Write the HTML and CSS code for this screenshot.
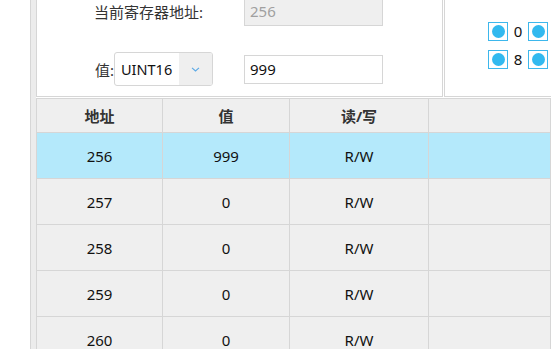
FILE: index.html
```html
<!DOCTYPE html>
<html lang="zh-CN">
<head>
    <meta charset="UTF-8">
    <title>寄存器</title>
    <link rel="stylesheet" href="styles.css">
</head>
<body>
    <div class="side"></div>

    <div class="frame">
        <div class="main">
            <div class="top">
                <div class="edit-panel">
                    <div class="edit-grid">
                        <span class="label">当前寄存器地址:</span>
                        <div class="field disabled">256</div>

                        <div class="value-cell">
                            <span class="label">值:</span>
                            <div class="combo">
                                <span class="combo-text">UINT16</span>
                                <span class="combo-arrow">
                                    <svg width="9" height="5" viewBox="0 0 9 5"><path d="M1 0.8 L4.5 4 L8 0.8" fill="none" stroke="#5ba9e6" stroke-width="1.1"/></svg>
                                </span>
                            </div>
                        </div>
                        <div class="field">999</div>
                    </div>
                </div>

                <div class="bit-panel">
                    <div class="bits" id="bits"></div>
                </div>
            </div>

            <table class="regs">
                <thead>
                    <tr>
                        <th class="c1">地址</th>
                        <th class="c2">值</th>
                        <th class="c3">读/写</th>
                        <th></th>
                    </tr>
                </thead>
                <tbody id="rows"></tbody>
            </table>
        </div>
    </div>

    <script>
        // 位指示灯 (0-7 第一行, 8-15 第二行)
        const bits = document.getElementById('bits');
        for (let i = 0; i < 16; i++) {
            const item = document.createElement('div');
            item.className = 'bit';
            item.innerHTML = '<span class="led"><span class="dot"></span></span><span class="bit-no">' + i + '</span>';
            bits.appendChild(item);
        }

        // 寄存器列表
        const rows = document.getElementById('rows');
        const regs = [
            { addr: 256, value: 999 },
            { addr: 257, value: 0 },
            { addr: 258, value: 0 },
            { addr: 259, value: 0 },
            { addr: 260, value: 0 }
        ];
        regs.forEach((r, idx) => {
            const tr = document.createElement('tr');
            if (idx === 0) tr.className = 'selected';
            tr.innerHTML = `<td>${r.addr}</td><td>${r.value}</td><td>R/W</td><td></td>`;
            rows.appendChild(tr);
        });
    </script>
</body>
</html>
```

FILE: styles.css
```css
body {
    margin: 0;
    height: 349px;
    display: flex;
    overflow: hidden;
    background: #fff;
    font-family: "Noto Sans", "Noto Sans CJK SC", sans-serif;
    font-size: 15px;
    color: #222;
}

.side {
    width: 30px;
    flex-shrink: 0;
    background: #fff;
}

.frame {
    flex: 1;
    display: flex;
    border-left: 1px solid #d6d6d6;
    background: #ececec;
    padding-left: 5px;
    min-width: 0;
}

.main {
    flex: 1;
    min-width: 0;
    overflow: hidden;
    background: #fff;
}

.top {
    display: flex;
    gap: 1px;
    height: 97px;
    margin-bottom: 1px;
}

.edit-panel {
    width: 405px;
    flex-shrink: 0;
    border: 1px solid #d6d6d6;
    border-top: none;
    background: #fff;
}

.edit-grid {
    display: grid;
    grid-template-columns: 176px 139px;
    column-gap: 31px;
    row-gap: 26px;
    align-items: center;
    justify-items: end;
    margin-top: -3px;
}

.edit-grid > .label {
    padding-right: 10px;
}

.label {
    color: #333;
}

.value-cell {
    display: flex;
    align-items: center;
}

.field {
    justify-self: stretch;
    height: 27px;
    line-height: 27px;
    padding-left: 5px;
    border: 1px solid #d6d6d6;
    background: #fff;
    color: #111;
}

.field.disabled {
    background: #efefef;
    color: #a0a0a0;
}

.combo {
    display: flex;
    width: 97px;
    height: 32px;
    border: 1px solid #d6d6d6;
    border-radius: 3px;
    background: #fff;
    overflow: hidden;
}

.combo-text {
    flex: 1;
    line-height: 32px;
    padding-left: 6px;
    font-size: 14.5px;
    color: #111;
}

.combo-arrow {
    width: 33px;
    display: flex;
    align-items: center;
    justify-content: center;
    background: #efefef;
}

.bit-panel {
    flex: 1;
    border-left: 1px solid #d6d6d6;
    border-bottom: 1px solid #d6d6d6;
    overflow: hidden;
}

.bits {
    display: grid;
    grid-template-columns: repeat(8, 40px);
    row-gap: 8px;
    margin: 21px 0 0 43px;
}

.bit {
    display: flex;
    align-items: center;
}

.led {
    width: 18px;
    height: 17px;
    border: 1px solid #3db7ec;
    display: flex;
    align-items: center;
    justify-content: center;
    background: #fff;
}

.dot {
    width: 13px;
    height: 13px;
    border-radius: 50%;
    background: #32b9ef;
}

.bit-no {
    width: 20px;
    text-align: center;
    font-size: 15px;
    color: #111;
}

.regs {
    border-collapse: collapse;
    width: 100%;
    table-layout: fixed;
}

.regs th,
.regs td {
    border: 1px solid #d6d6d6;
    text-align: center;
    padding: 0;
}

.regs th {
    height: 33px;
    background: #efefef;
    color: #333;
    font-weight: bold;
}

.regs .c1 { width: 125px; }
.regs .c2 { width: 126px; }
.regs .c3 { width: 138px; }

.regs td {
    height: 45px;
    background: #efefef;
    color: #111;
}

.regs tr.selected td {
    background: #b4e9fb;
}
```
